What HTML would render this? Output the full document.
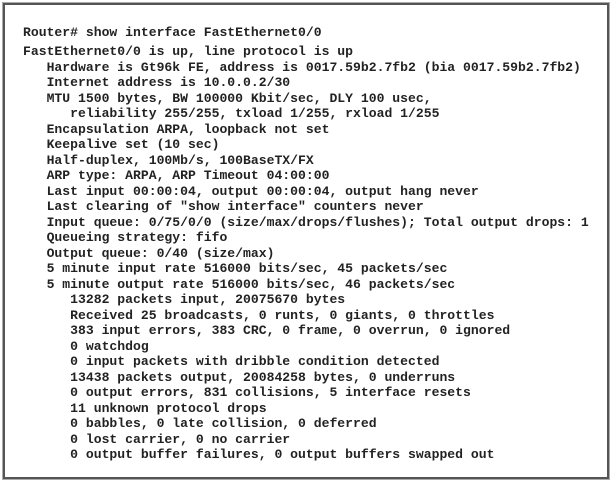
<!DOCTYPE html>
<html><head><style>
html,body{margin:0;padding:0;background:#fff;width:614px;height:484px;overflow:hidden}
.box{position:absolute;left:3px;top:3px;width:602px;height:472px;border:2px solid #555;box-shadow:0 0 0 1px #aaa}
.t{position:absolute;font-family:"Liberation Mono",monospace;font-weight:bold;font-size:13.1px;color:#222;white-space:pre;line-height:15.5px}
</style></head><body>
<div class="box"></div>
<div class="t" style="left:23px;top:25px">Router# show interface FastEthernet0/0</div>
<div class="t" style="left:23px;top:44px">FastEthernet0/0 is up, line protocol is up
   Hardware is Gt96k FE, address is 0017.59b2.7fb2 (bia 0017.59b2.7fb2)
   Internet address is 10.0.0.2/30
   MTU 1500 bytes, BW 100000 Kbit/sec, DLY 100 usec,
      reliability 255/255, txload 1/255, rxload 1/255
   Encapsulation ARPA, loopback not set
   Keepalive set (10 sec)
   Half-duplex, 100Mb/s, 100BaseTX/FX
   ARP type: ARPA, ARP Timeout 04:00:00
   Last input 00:00:04, output 00:00:04, output hang never
   Last clearing of "show interface" counters never
   Input queue: 0/75/0/0 (size/max/drops/flushes); Total output drops: 1
   Queueing strategy: fifo
   Output queue: 0/40 (size/max)
   5 minute input rate 516000 bits/sec, 45 packets/sec
   5 minute output rate 516000 bits/sec, 46 packets/sec
      13282 packets input, 20075670 bytes
      Received 25 broadcasts, 0 runts, 0 giants, 0 throttles
      383 input errors, 383 CRC, 0 frame, 0 overrun, 0 ignored
      0 watchdog
      0 input packets with dribble condition detected
      13438 packets output, 20084258 bytes, 0 underruns
      0 output errors, 831 collisions, 5 interface resets
      11 unknown protocol drops
      0 babbles, 0 late collision, 0 deferred
      0 lost carrier, 0 no carrier
      0 output buffer failures, 0 output buffers swapped out</div>
</body></html>
